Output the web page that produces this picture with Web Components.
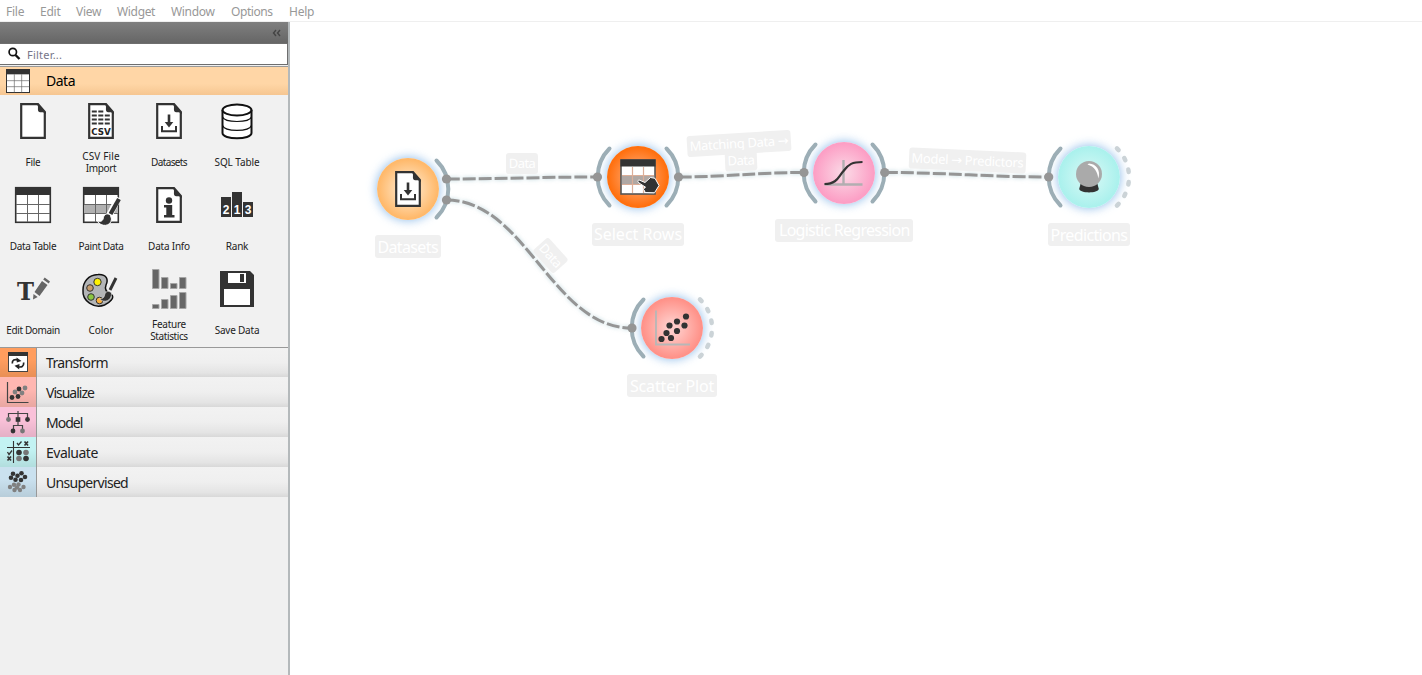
<!DOCTYPE html>
<html lang="en">
<head>
<meta charset="utf-8">
<title>Workflow editor</title>
<style>
html,body{margin:0;height:100%;overflow:hidden;background:#fff}
body{font-family:"Noto Sans","DejaVu Sans","Open Sans",sans-serif}
</style>
</head>
<body>
<workflow-app></workflow-app>
<script>
const doc = inner => `<path d="M12.2 7.2H29L35.8 15V40.8H12.2Z" fill="#fff" stroke="#333" stroke-width="2.2"/><path d="M27 6L37 15.5V17C33 13.5 31 16.5 29.5 14.5C28 12 30.500 9 27 6Z" fill="#333"/>${inner}`;
const grid = extra => `<rect x="6.700" y="6.700" width="34.600" height="34.600" fill="#fff" stroke="#333" stroke-width="1.600"/>${extra||''}<path d="M18.500 14V41M29.500 14V41M7 23.500H41M7 32.500H41" stroke="#666" stroke-width="1"/><rect x="6" y="6" width="36" height="8" fill="#333"/>`;
const download = `<path d="M24 17.500V26" stroke="#333" stroke-width="2.600"/><path d="M19.700 25H28.300L24 30.500Z" fill="#333"/><path d="M17 29V34.300H31V29" fill="none" stroke="#333" stroke-width="2"/>`;
const brush = `<path d="M41.500 16.500L32.500 34" stroke="#fff" stroke-width="6.500"/><path d="M42 18L33.500 33" stroke="#333" stroke-width="4.200"/><path d="M33.500 34.500C31 31.500 27 33 26.500 36.500C26 40 23.500 41 20.500 40.500C24 46 34 46 34.500 38Z" fill="#333" stroke="#fff" stroke-width="1"/>`;
const icons = {
  file: doc(''),
  csv: doc(`<path d="M14.800 14.500H27M14.800 18.500H34M14.800 22.500H34M14.800 26.500H34" stroke="#333" stroke-width="2" stroke-dasharray="5 1.500"/><text x="24" y="38" text-anchor="middle" textLength="19.500" lengthAdjust="spacingAndGlyphs" font-family="DejaVu Sans" font-weight="700" font-size="9.500" fill="#222">CSV</text>`),
  datasets: doc(download),
  sql: `<path d="M9.500 13V36C9.500 43 38.500 43 38.500 36V13" fill="#fff" stroke="#111" stroke-width="2"/><ellipse cx="24" cy="13" rx="14.500" ry="5.500" fill="#fff" stroke="#111" stroke-width="2"/><path d="M9.500 20C12 26 36 26 38.500 20M9.500 28.500C12 35 36 35 38.500 28.500" fill="none" stroke="#111" stroke-width="1.200"/>`,
  table: grid(),
  paint: grid(`<rect x="7" y="23" width="34" height="9" fill="#b1b1b1"/>`)+brush,
  info: doc(`<circle cx="24" cy="19.500" r="3.200" fill="#333"/><path d="M19 24H27.200V34H29.500V36.500H19V34H21.300V26.500H19Z" fill="#333"/>`),
  rank: `<path d="M8 16H18V36H8ZM19 11H29V36H19ZM30 21H40V36H30Z" fill="#333"/><g font-family="Liberation Sans" font-weight="700" font-size="12" text-anchor="middle" fill="#fff"><text x="13" y="33">2</text><text x="24" y="33">1</text><text x="35" y="33">3</text></g>`,
  domain: `<text x="16.500" y="34.700" text-anchor="middle" font-family="DejaVu Serif" font-weight="700" font-size="25" textLength="17" lengthAdjust="spacingAndGlyphs" fill="#333">T</text><path d="M25.500 27L33 16L38.500 20L30.500 31ZM34.200 14.500L35.700 12.500L41 16.500L39.700 18.500ZM24.500 29L28.700 32L24 34.500Z" fill="#666"/>`,
  color: `<path d="M21 9.600C30 9 31.500 15 29 20C27 25 31 28 34 29.500C39 32 32 38 27.500 40C17 44 5 36 6 25C6 17 11 10 21 9.600Z" fill="#b3b5b7" stroke="#111" stroke-width="1.500"/><g stroke="#333" stroke-width="1"><circle cx="20.500" cy="17" r="3.700" fill="#fff200"/><circle cx="13" cy="23" r="3.300" fill="#c69c6d"/><circle cx="14" cy="32" r="3.300" fill="#8cc63f"/><circle cx="22.500" cy="35.500" r="3.300" fill="#fbb03b"/></g><path d="M39.500 12.500L32.500 26" stroke="#f0f0f0" stroke-width="5"/><path d="M39 13L33 25" stroke="#333" stroke-width="3"/><path d="M34.500 28C31 24.500 28 27 27.500 30.500C27 33 25 34 22.500 34C27 38.500 35 36 34.500 28Z" fill="#333" stroke="#eee" stroke-width=".6"/>`,
  stats: `<path d="M7.500 4.500H14V23.500H7.500ZM16.500 12.500H23V23.500H16.500ZM25.500 18.500H32V23.500H25.500ZM34.500 12.500H41V23.500H34.500ZM7.500 39.500H14V43.500H7.500ZM16.500 34.500H23V43.500H16.500ZM25.500 30.500H32V43.500H25.500ZM34.500 27.500H41V43.500H34.500Z" fill="#666" stroke="#a5a5a5" stroke-width="1"/>`,
  save: `<path d="M7 6H37L41 10V42H7Z" fill="#333"/><path d="M15 8H33V18H15ZM11 24H37V40H11Z" fill="#fff"/><rect x="27" y="9" width="4" height="8" fill="#333"/>`,
  rows: `<rect x="7" y="7" width="34" height="34" fill="#fff" stroke="#555" stroke-width="1.600"/><rect x="8" y="23" width="32" height="8.500" fill="#b0a8a4"/><path d="M18.500 14V40M29.500 14V40M8 22.500H40M8 31.500H40" stroke="#dcae98" stroke-width="1.200"/><rect x="6.500" y="6.500" width="35" height="7" fill="#333"/><path d="M23.800 28.200C24 26.800 25.500 26.800 27 27.800L31 29.500L36.500 24.500L41 25.300L45 32.500L40.500 39.800L31 39.500L30.500 37.500L29 36.500L31.500 34.200L25 30Z" fill="#333" stroke="#fff" stroke-width="1"/>`,
  logistic: `<path d="M24 12V36M5 36.500H43" stroke="#b2aeb1" stroke-width="2.400"/><path d="M5 36C18 36 19 28 24 23C29 16 33 14 43 14" fill="none" stroke="#333" stroke-width="2.200"/>`,
  ball: `<path d="M15.500 31H32.500L33.800 36C33 40.500 15 40.500 14.200 36Z" fill="#333"/><circle cx="24" cy="21" r="13" fill="#aaa"/><path d="M24 10.500C31 11 36 17 33.300 25.500C32.500 19 29.500 13.500 22.500 11.500Z" fill="#fff"/>`,
  scatter: `<path d="M8 6.500V40.500H42" fill="none" stroke="#b7b7b7" stroke-width="1.800"/><g fill="#333"><circle cx="13.500" cy="35" r="3.100"/><circle cx="18.500" cy="29" r="3.100"/><circle cx="23" cy="34" r="3.100"/><circle cx="21.500" cy="21.500" r="3.100"/><circle cx="29" cy="27" r="3.100"/><circle cx="29" cy="17.500" r="3.100"/><circle cx="36.500" cy="21.500" r="3.100"/><circle cx="38" cy="12.500" r="3.100"/></g>`
};
const dots = (list,r,c) => `<g fill="${c}">`+list.map(p=>`<circle cx="${p[0]}" cy="${p[1]}" r="${r}"/>`).join('')+'</g>';
const tabIcons = {
  transform: `<rect x="8.500" y="4.500" width="19" height="19" fill="#fff" stroke="#444"/><rect x="8" y="4" width="20" height="4" fill="#333"/><path d="M12.300 15.500C12 12 14.500 11 18 11.800M23.700 14.500C24 18.500 21.500 19.500 18 18.800" fill="none" stroke="#222" stroke-width="1.700"/><path d="M16.500 9.500L21.500 13L16.800 14.500ZM19.500 16L14.500 17.700L19.200 21.500Z" fill="#222"/>`,
  visualize: `<path d="M7.500 4V24.500H28.500" fill="none" stroke="#444" stroke-width="1.200"/>`+dots([[12,19.500],[18,18.500],[19,11]],2.400,'#333')+dots([[15,14],[22,15],[25,10]],2.400,'#808080'),
  model: `<path d="M8.500 10V5.500H27.500V10M18 3V10M13.500 21V17.500H22.500V21M18 12V17.500" fill="none" stroke="#444" stroke-width="1.200"/><rect x="15.700" y="9.200" width="4.600" height="4.600" fill="#333"/>`+dots([[27.500,11.500],[13,23]],2.400,'#333')+dots([[8.500,11.500],[22.500,23]],2.400,'#777'),
  evaluate: `<path d="M7 9.500H30M13.500 3V25" stroke="#333" stroke-width="1.100"/><path d="M17 5L18.500 7L21.500 3.500M7.500 14L9 16.500L12 12.500" fill="none" stroke="#333" stroke-width="1.300"/><path d="M24.500 3.500L28 7.500M28 3.500L24.500 7.500M7.500 18.500L11 22.500M11 18.500L7.500 22.500" stroke="#333" stroke-width="1.700"/>`+dots([[19,14.500],[26,20.500]],2.800,'#333')+dots([[26,14.500],[19,20.500]],2.800,'#777'),
  unsupervised: dots([[13,5.700],[21.500,5.200],[17.500,7.700],[11,9.700],[25,9],[15.500,11.700],[21,12]],2.300,'#333')+dots([[14,16.700],[18.500,16.500],[10,19],[23.500,19],[17,19.500],[14.500,22],[20,22]],2.200,'#808080')
};
class Base extends HTMLElement{
  paint(html){
    if(!this.shadowRoot) this.attachShadow({mode:'open'});
    this.shadowRoot.innerHTML = html;
    // Spread the glyphs evenly over each label's nominal width
    this.shadowRoot.querySelectorAll('[data-w]').forEach(el=>{
      el.style.whiteSpace='nowrap';
      const w = el.offsetWidth;
      if(w && el.textContent) el.style.letterSpacing = ((+el.dataset.w - w)/el.textContent.length)+'px';
    });
  }
  a(n){return this.getAttribute(n)||'';}
}
customElements.define('menu-bar', class extends Base{connectedCallback(){
  const items=[['File',18],['Edit',20],['View',25],['Widget',38],['Window',44],['Options',42],['Help',25]];
  this.paint(`<style>:host{display:flex;box-sizing:border-box;height:22px;padding:2px 6px 0;border-bottom:1px solid #efefef;gap:16px;background:#fff;color:#989898;font-size:12px;line-height:20px}span{display:inline-block}</style>${items.map(i=>`<div style="width:${i[1]}px"><span data-w="${i[1]}">${i[0]}</span></div>`).join('')}`);
}});
customElements.define('tool-item', class extends Base{connectedCallback(){
  const lines=this.a('label').split('|'), ws=this.a('w').split(',');
  this.paint(`<style>:host{display:flex;flex-direction:column;align-items:center;height:84px;padding-top:2px;box-sizing:border-box;color:#222}svg{width:48px;height:48px;flex:none}.l{flex:none;height:34px;display:flex;flex-direction:column;justify-content:center;align-items:center;font-size:10px;line-height:12px}</style><svg viewBox="0 0 48 48">${icons[this.a('icon')]}</svg><div class="l">${lines.map((t,i)=>`<span data-w="${ws[i]}">${t}</span>`).join('')}</div>`);
}});
customElements.define('category-tab', class extends Base{connectedCallback(){
  this.paint(`<style>:host{display:flex;box-sizing:border-box;height:30px;background:linear-gradient(#f2f2f2,#efefef 50%,#e4e4e4 85%,#d8d8d8);color:#222;font-size:14px;line-height:30px}:host([first]){border-top:1px solid #999}.i,.t{box-sizing:border-box;height:100%;padding-top:1px}:host([first]) .i,:host([first]) .t{padding-top:0}.i{width:37px;overflow:hidden;border-right:1px solid #999;background:linear-gradient(transparent 40%,rgba(0,0,0,.09)),${this.a('color')}}svg{display:block;width:36px;height:30px}.t{padding-left:9px}span{display:inline-block;white-space:nowrap}</style><div class="i"><svg viewBox="0 0 36 30">${tabIcons[this.a('icon')]}</svg></div><div class="t"><span><slot></slot></span></div>`);
  const s=this.shadowRoot.querySelector('span');
  s.style.letterSpacing=((+this.a('w')-s.offsetWidth)/this.textContent.length)+'px';
}});
customElements.define('tool-box', class extends Base{connectedCallback(){
  const tools=[['file','File','15'],['csv','CSV File|Import','37,31'],['datasets','Datasets','36'],['sql','SQL Table','45'],['table','Data Table','46'],['paint','Paint Data','45'],['info','Data Info','42'],['rank','Rank','22'],['domain','Edit Domain','54'],['color','Color','25'],['stats','Feature|Statistics','34,37'],['save','Save Data','45']];
  this.paint(`<style>
:host{display:flex;flex-direction:column;box-sizing:border-box;width:290px;border-right:2px solid #b4b9bb;background:#f0f0f0}
.top{height:21px;box-sizing:border-box;background:linear-gradient(#7f7f7f,#666);display:flex;justify-content:flex-end;align-items:center;padding-right:7px}
.top svg{width:9px;height:8px}
.filter{height:22px;box-sizing:border-box;border:1px solid #6e6e6e;border-left:0;background:#fff;display:flex;align-items:center;padding-left:7px;gap:5px;color:#777589;font-size:11px;margin-bottom:1px}
.filter svg{width:15px;height:14px}
.head{height:29px;box-sizing:border-box;border-top:1px solid #999;background:linear-gradient(#ffd6a6 60%,#f6c691);display:flex;align-items:center;padding:0 0 1px 6px;font-size:14px;color:#000;gap:16px}
.head svg{width:24px;height:24px}
.grid{display:grid;grid-template-columns:repeat(4,68px);margin-left:-1px;height:252px;background:#f1f1f1}
</style>
<div class="top"><svg viewBox="0 0 9 8"><path d="M4 1L1.500 4L4 7M8 1L5.500 4L8 7" fill="none" stroke="#444" stroke-width="1.400"/></svg></div>
<div class="filter"><svg viewBox="0 0 15 14"><circle cx="5.800" cy="5" r="3.700" fill="none" stroke="#111" stroke-width="1.700"/><path d="M8.500 8L12.500 12" stroke="#111" stroke-width="2.400"/></svg><span data-w="35">Filter...</span></div>
<div class="head"><svg viewBox="6 6 36 36">${grid('')}</svg><span data-w="29">Data</span></div>
<div class="grid">${tools.map(t=>`<tool-item icon="${t[0]}" label="${t[1]}" w="${t[2]}"></tool-item>`).join('')}</div>
<category-tab first icon="transform" color="#ff9d5e" w="62">Transform</category-tab>
<category-tab icon="visualize" color="#ffb7b1" w="48">Visualize</category-tab>
<category-tab icon="model" color="#fac1d9" w="36">Model</category-tab>
<category-tab icon="evaluate" color="#c3f3f3" w="52">Evaluate</category-tab>
<category-tab icon="unsupervised" color="#cae1ef" w="81.500">Unsupervised</category-tab>`);
}});
customElements.define('flow-node', class extends Base{connectedCallback(){
  const left=`M-28.500 -28.500A40.300 40.300 0 0 0 -28.500 28.500`, right=`M28.500 -28.500A40.300 40.300 0 0 1 28.500 28.500`;
  const p=this.a('ports'); let s='';
  if(p.includes('l')) s+=`<path d="${left}"/>`;
  if(p.includes('r')) s+=`<path d="${right}"/>`;
  let d='';
  if(p.includes('d')) for(const a of [-44,-26.500,-9,9,26.500,44]) d+=`<path transform="rotate(${a})" d="M40 -1.200V1.200"/>`;
  this.paint(`<style>:host{position:absolute;left:${this.a('x')}px;top:${this.a('y')}px;width:0}
svg{position:absolute;left:-50px;top:-50px;width:100px;height:100px}
.disc{position:absolute;left:-31px;top:-31px;width:62px;height:62px;border-radius:50%;background:radial-gradient(circle closest-side,${this.a('inner')} 15%,${this.a('outer')} 95%);box-shadow:0 0 10px 1px rgba(120,175,230,.75)}
.label{position:absolute;left:${-this.a('bw')/2}px;top:46px;width:${this.a('bw')}px;height:23px;border-radius:3px;background:#f0f0f0;color:#fff;font-size:16px;line-height:${this.a('lh')||23}px;display:flex;justify-content:center}</style>
<div class="disc"></div><svg viewBox="-50 -50 100 100"><g fill="none" stroke="#9caeb6" stroke-width="4" stroke-linecap="round">${s}</g><g fill="none" stroke="#cbd3d7" stroke-width="4.500" stroke-linecap="round">${d}</g><g transform="translate(${this.a('io')||'-24,-24'})">${icons[this.a('icon')]}</g></svg>
<div class="label"><span data-w="${this.a('w')}">${this.a('label')}</span></div>`);
}});
customElements.define('link-label', class extends Base{connectedCallback(){
  this.paint(`<style>:host{position:absolute;left:${this.a('x')-this.a('bw')/2}px;top:${this.a('y')-10.5}px;width:${this.a('bw')}px;height:21px;border-radius:3px;background:#f0f0f0;color:#fff;font-family:"Noto Sans","DejaVu Sans",sans-serif;font-size:13px;line-height:21px;display:flex;justify-content:center;transform:rotate(${this.a('rot')||0}deg)}i{font-style:normal;font-family:"DejaVu Sans"}</style><span data-w="${this.a('w')}">${this.a('text').replace('→','<i>→</i>')}</span>`);
}});
customElements.define('flow-canvas', class extends Base{connectedCallback(){
  const ports=[[446.5,179],[446.5,200],[597.5,177],[678.5,177],[804,172.500],[884.7,172.500],[1048.700,177],[632,328]];
  this.paint(`<style>:host{display:block;position:relative;overflow:hidden;background:#fff}.space{position:absolute;left:-290px;top:-22px;width:1422px;height:675px}.space>svg{position:absolute;inset:0;width:1422px;height:675px;pointer-events:none}</style>
<div class="space">
<svg viewBox="0 0 1422 675"><g fill="none" stroke="#959595" stroke-width="3" stroke-dasharray="13 3" style="filter:drop-shadow(0 0 2px rgba(150,190,200,.6))"><path d="M446.500 179C506 179 538 177 597.500 177M446.500 200C526 200 552 328 631.500 328M678.500 177C728 177 754 172.500 803.700 172.500M884.700 172.500C945 172.500 989 177 1048.500 177"/></g></svg>
<link-label x="521.5" y="163.5" bw="32" w="27" text="Data" rot="-.5"></link-label>
<link-label x="739" y="143.300" bw="104" w="99" text="Matching Data →" rot="-3.500"></link-label>
<link-label x="740.500" y="160.500" bw="32" w="27" text="Data" rot="-2.500"></link-label>
<link-label x="967.500" y="160.500" bw="117" w="112" text="Model → Predictors" rot="2.500"></link-label>
<link-label x="550" y="255" bw="31" w="27" text="Data" rot="48"></link-label>
<flow-node x="407.700" y="189" icon="datasets" inner="#ffe8cb" outer="#ffb96b" ports="r" bw="66" w="61" lh="25" label="Datasets"></flow-node>
<flow-node x="638" y="176.500" icon="rows" inner="#ffad7b" outer="#ff700f" ports="lr" bw="92" w="88" label="Select Rows"></flow-node>
<flow-node x="844.300" y="172.500" icon="logistic" inner="#fbd2e2" outer="#fc9fc5" ports="lr" bw="138" w="131" label="Logistic Regression" io="-24.5,-25"></flow-node>
<flow-node x="1089" y="177" icon="ball" inner="#d4f8f5" outer="#abf1ed" ports="ld" bw="82" w="77" lh="25" label="Predictions"></flow-node>
<flow-node x="672" y="328" icon="scatter" inner="#ffcdca" outer="#ff9289" ports="ld" bw="90" w="84" lh="25" label="Scatter Plot"></flow-node>
<svg viewBox="0 0 1422 675"><g fill="#959595">${ports.map(p=>`<circle cx="${p[0]}" cy="${p[1]}" r="4.600"/>`).join('')}</g></svg>
</div>`);
}});
customElements.define('workflow-app', class extends Base{connectedCallback(){
  this.paint(`<style>:host{display:grid;width:100vw;height:100vh;grid-template:22px 1fr / 290px 1fr}menu-bar{grid-column:1/-1}</style><menu-bar></menu-bar><tool-box></tool-box><flow-canvas></flow-canvas>`);
}});
</script>
</body>
</html>
